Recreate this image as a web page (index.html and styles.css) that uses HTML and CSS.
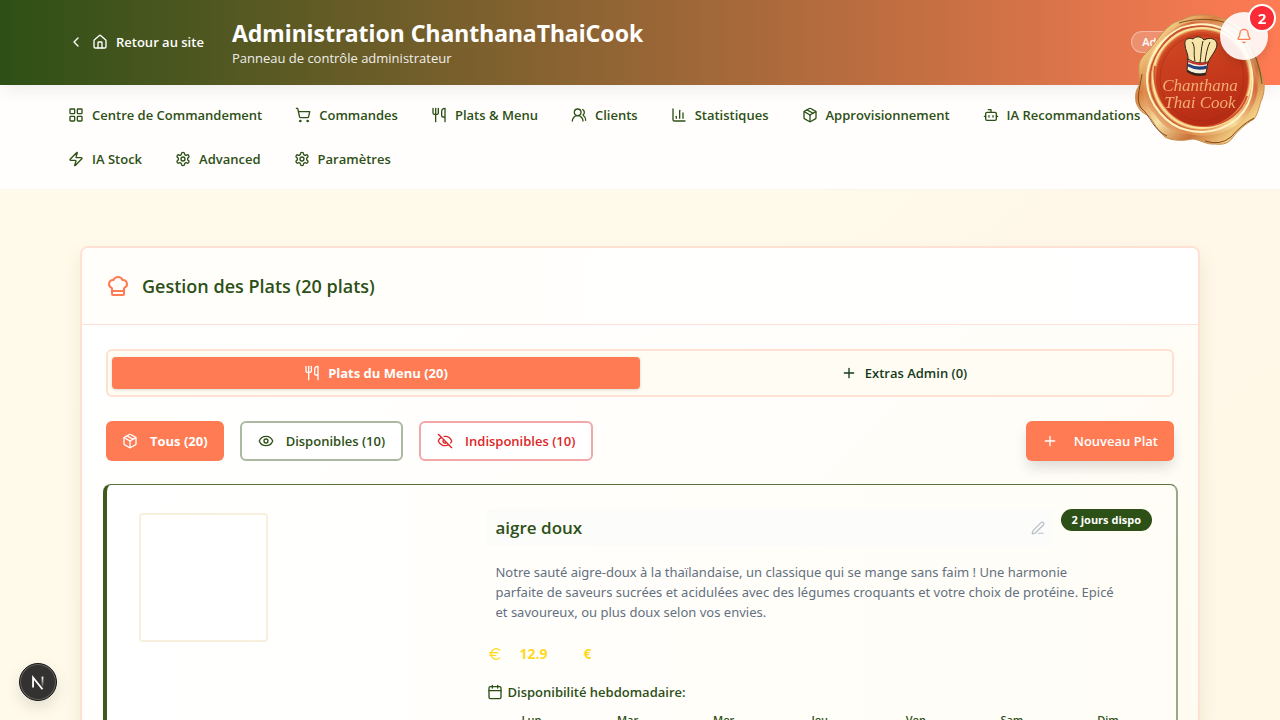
FILE: index.html
```
<!DOCTYPE html>
<html lang="fr">
<head>
<meta charset="utf-8">
<meta name="viewport" content="width=device-width, initial-scale=1">
<title>Administration ChanthanaThaiCook</title>
<link rel="stylesheet" href="styles.css">
</head>
<body>
<svg class="sprite" aria-hidden="true">
  <symbol id="i-chevron" viewBox="0 0 24 24"><path d="m15 18-6-6 6-6"/></symbol>
  <symbol id="i-house" viewBox="0 0 24 24"><path d="M15 21v-8a1 1 0 0 0-1-1h-4a1 1 0 0 0-1 1v8"/><path d="M3 10a2 2 0 0 1 .709-1.528l7-6a2 2 0 0 1 2.582 0l7 6A2 2 0 0 1 21 10v9a2 2 0 0 1-2 2H5a2 2 0 0 1-2-2z"/></symbol>
  <symbol id="i-grid" viewBox="0 0 24 24"><rect width="7" height="7" x="3" y="3" rx="1"/><rect width="7" height="7" x="14" y="3" rx="1"/><rect width="7" height="7" x="14" y="14" rx="1"/><rect width="7" height="7" x="3" y="14" rx="1"/></symbol>
  <symbol id="i-cart" viewBox="0 0 24 24"><circle cx="8" cy="21" r="1"/><circle cx="19" cy="21" r="1"/><path d="M2.05 2.05h2l2.66 12.42a2 2 0 0 0 2 1.58h9.78a2 2 0 0 0 1.95-1.57l1.65-7.43H5.12"/></symbol>
  <symbol id="i-utensils" viewBox="0 0 24 24"><path d="M3 2v7c0 1.100.9 2 2 2h4a2 2 0 0 0 2-2V2"/><path d="M7 2v20"/><path d="M21 15V2a5 5 0 0 0-5 5v6c0 1.100.9 2 2 2h3Zm0 0v7"/></symbol>
  <symbol id="i-users" viewBox="0 0 24 24"><path d="M18 21a8 8 0 0 0-16 0"/><circle cx="10" cy="8" r="5"/><path d="M22 20c0-3.370-2-6.500-4-8a5 5 0 0 0-.45-8.300"/></symbol>
  <symbol id="i-chart" viewBox="0 0 24 24"><path d="M3 3v16a2 2 0 0 0 2 2h16"/><path d="M18 17V9"/><path d="M13 17V5"/><path d="M8 17v-3"/></symbol>
  <symbol id="i-package" viewBox="0 0 24 24"><path d="M11 21.730a2 2 0 0 0 2 0l7-4A2 2 0 0 0 21 16V8a2 2 0 0 0-1-1.730l-7-4a2 2 0 0 0-2 0l-7 4A2 2 0 0 0 3 8v8a2 2 0 0 0 1 1.730z"/><path d="M12 22V12"/><path d="m3.300 7 8.700 5 8.700-5"/><path d="m7.500 4.270 9 5.150"/></symbol>
  <symbol id="i-bot" viewBox="0 0 24 24"><path d="M12 8V4H8"/><rect width="16" height="12" x="4" y="8" rx="2"/><path d="M2 14h2M20 14h2M15 13v2M9 13v2"/></symbol>
  <symbol id="i-zap" viewBox="0 0 24 24"><path d="M4 14a1 1 0 0 1-.78-1.630l9.900-10.200a.5.5 0 0 1 .86.46l-1.920 6.020A1 1 0 0 0 13 10h7a1 1 0 0 1 .78 1.630l-9.900 10.200a.5.5 0 0 1-.86-.46l1.920-6.020A1 1 0 0 0 11 14z"/></symbol>
  <symbol id="i-gear" viewBox="0 0 24 24"><path d="M12.220 2h-.44a2 2 0 0 0-2 2v.18a2 2 0 0 1-1 1.730l-.43.25a2 2 0 0 1-2 0l-.15-.08a2 2 0 0 0-2.730.73l-.22.38a2 2 0 0 0 .73 2.730l.15.1a2 2 0 0 1 1 1.720v.51a2 2 0 0 1-1 1.740l-.15.09a2 2 0 0 0-.73 2.730l.22.38a2 2 0 0 0 2.730.73l.15-.08a2 2 0 0 1 2 0l.43.25a2 2 0 0 1 1 1.730V20a2 2 0 0 0 2 2h.44a2 2 0 0 0 2-2v-.18a2 2 0 0 1 1-1.730l.43-.25a2 2 0 0 1 2 0l.15.08a2 2 0 0 0 2.730-.73l.22-.39a2 2 0 0 0-.73-2.730l-.15-.08a2 2 0 0 1-1-1.740v-.5a2 2 0 0 1 1-1.740l.15-.09a2 2 0 0 0 .73-2.730l-.22-.38a2 2 0 0 0-2.730-.73l-.15.08a2 2 0 0 1-2 0l-.43-.25a2 2 0 0 1-1-1.730V4a2 2 0 0 0-2-2z"/><circle cx="12" cy="12" r="3"/></symbol>
  <symbol id="i-chef" viewBox="0 0 24 24"><path d="M17 21a1 1 0 0 0 1-1v-5.350c0-.457.316-.844.727-1.041a4 4 0 0 0-2.134-7.589 5 5 0 0 0-9.186 0 4 4 0 0 0-2.134 7.588c.411.198.727.585.727 1.041V20a1 1 0 0 0 1 1Z"/><path d="M6 17h12"/></symbol>
  <symbol id="i-plus" viewBox="0 0 24 24"><path d="M5 12h14M12 5v14"/></symbol>
  <symbol id="i-eye" viewBox="0 0 24 24"><path d="M2.062 12.348a1 1 0 0 1 0-.696 10.750 10.750 0 0 1 19.876 0 1 1 0 0 1 0 .696 10.750 10.750 0 0 1-19.876 0"/><circle cx="12" cy="12" r="3"/></symbol>
  <symbol id="i-eye-off" viewBox="0 0 24 24"><path d="M10.733 5.076a10.744 10.744 0 0 1 11.205 6.575 1 1 0 0 1 0 .696 10.747 10.747 0 0 1-1.444 2.490"/><path d="M14.084 14.158a3 3 0 0 1-4.242-4.242"/><path d="M17.479 17.499a10.750 10.750 0 0 1-15.417-5.151 1 1 0 0 1 0-.696 10.750 10.750 0 0 1 4.446-5.143"/><path d="m2 2 20 20"/></symbol>
  <symbol id="i-pen" viewBox="0 0 24 24"><path d="M13 21h8"/><path d="M21.174 6.812a1 1 0 0 0-3.986-3.987L3.842 16.174a2 2 0 0 0-.5.83l-1.321 4.352a.5.5 0 0 0 .623.622l4.353-1.320a2 2 0 0 0 .83-.497z"/></symbol>
  <symbol id="i-euro" viewBox="0 0 24 24"><path d="M4 10h12M4 14h9"/><path d="M19 6a7.700 7.700 0 0 0-5.200-2A7.900 7.900 0 0 0 6 12c0 4.400 3.500 8 7.800 8 2 0 3.800-.8 5.200-2"/></symbol>
  <symbol id="i-calendar" viewBox="0 0 24 24"><path d="M8 2v4M16 2v4"/><rect width="18" height="18" x="3" y="4" rx="2"/><path d="M3 10h18"/></symbol>
  <symbol id="i-bell" viewBox="0 0 24 24"><path d="M10.268 21a2 2 0 0 0 3.464 0"/><path d="M3.262 15.326A1 1 0 0 0 4 17h16a1 1 0 0 0 .74-1.673C19.410 13.956 18 12.499 18 8A6 6 0 0 0 6 8c0 4.499-1.411 5.956-2.738 7.326"/></symbol>
</svg>

<header class="topbar">
  <div class="topbar-inner">
    <a class="back" href="#"><svg class="icon"><use href="#i-chevron"/></svg><svg class="icon"><use href="#i-house"/></svg><span>Retour au site</span></a>
    <div class="brand">
      <h1>Administration ChanthanaThaiCook</h1>
      <p>Panneau de contrôle administrateur</p>
    </div>
    <span class="role">Admin</span>
  </div>
</header>

<nav class="nav">
  <div class="nav-inner">
    <a href="#"><svg class="icon"><use href="#i-grid"/></svg>Centre de Commandement</a>
    <a href="#"><svg class="icon"><use href="#i-cart"/></svg>Commandes</a>
    <a href="#"><svg class="icon"><use href="#i-utensils"/></svg>Plats &amp; Menu</a>
    <a href="#"><svg class="icon"><use href="#i-users"/></svg>Clients</a>
    <a href="#"><svg class="icon"><use href="#i-chart"/></svg>Statistiques</a>
    <a href="#"><svg class="icon"><use href="#i-package"/></svg>Approvisionnement</a>
    <a href="#"><svg class="icon"><use href="#i-bot"/></svg>IA Recommandations</a>
    <a href="#"><svg class="icon"><use href="#i-zap"/></svg>IA Stock</a>
    <a href="#"><svg class="icon"><use href="#i-gear"/></svg>Advanced</a>
    <a href="#"><svg class="icon"><use href="#i-gear"/></svg>Paramètres</a>
  </div>
</nav>

<main class="main">
  <section class="panel">
    <div class="panel-head">
      <svg class="icon icon-lg"><use href="#i-chef"/></svg>
      <h2>Gestion des Plats (20 plats)</h2>
    </div>
    <div class="panel-body">
      <div class="tabs" role="tablist">
        <button class="tab active" role="tab" aria-selected="true"><svg class="icon"><use href="#i-utensils"/></svg>Plats du Menu (20)</button>
        <button class="tab" role="tab" aria-selected="false"><svg class="icon"><use href="#i-plus"/></svg>Extras Admin (0)</button>
      </div>
      <div class="toolbar">
        <button class="btn solid"><svg class="icon"><use href="#i-package"/></svg>Tous (20)</button>
        <button class="btn green"><svg class="icon"><use href="#i-eye"/></svg>Disponibles (10)</button>
        <button class="btn red"><svg class="icon"><use href="#i-eye-off"/></svg>Indisponibles (10)</button>
        <button class="btn solid new"><svg class="icon"><use href="#i-plus"/></svg>Nouveau Plat</button>
      </div>
      <article class="dish">
        <div class="photo-col"><div class="photo"></div></div>
        <div class="info">
          <div class="title-row">
            <button class="dish-title"><span>aigre doux</span><svg class="icon icon-sm"><use href="#i-pen"/></svg></button>
            <span class="days-badge">2 jours dispo</span>
          </div>
          <p class="desc">Notre sauté aigre-doux à la thaïlandaise, un classique qui se mange sans faim ! Une harmonie<br>parfaite de saveurs sucrées et acidulées avec des légumes croquants et votre choix de protéine. Epicé<br>et savoureux, ou plus doux selon vos envies.</p>
          <div class="price"><svg class="icon"><use href="#i-euro"/></svg><span class="amount">12.9</span><span class="unit">€</span></div>
          <div class="week-label"><svg class="icon"><use href="#i-calendar"/></svg>Disponibilité hebdomadaire:</div>
          <div class="week"><span>Lun</span><span>Mar</span><span>Mer</span><span>Jeu</span><span>Ven</span><span>Sam</span><span>Dim</span></div>
        </div>
      </article>
    </div>
  </section>
</main>

<svg class="seal" viewBox="0 0 130 132" role="img" aria-label="Chanthana Thai Cook">
  <defs>
    <linearGradient id="gold" x1="0" y1="0" x2="1" y2="1">
      <stop offset="0" stop-color="#b9772e"/><stop offset=".15" stop-color="#f6d68c"/><stop offset=".32" stop-color="#d98040"/>
      <stop offset=".5" stop-color="#f8e3a4"/><stop offset=".68" stop-color="#c9733a"/><stop offset=".85" stop-color="#f4d083"/><stop offset="1" stop-color="#8a5424"/>
    </linearGradient>
    <linearGradient id="gold2" x1="1" y1="0" x2="0" y2="1">
      <stop offset="0" stop-color="#fae8b4"/><stop offset=".3" stop-color="#d46a3a"/><stop offset=".55" stop-color="#f7dc98"/><stop offset=".8" stop-color="#dd8a4c"/><stop offset="1" stop-color="#fbeec0"/>
    </linearGradient>
    <linearGradient id="wax" x1=".3" y1="0" x2=".6" y2="1">
      <stop offset="0" stop-color="#cf4824"/><stop offset=".5" stop-color="#c63a1b"/><stop offset="1" stop-color="#b42a14"/>
    </linearGradient>
  </defs>
  <path fill="url(#gold)" stroke="#c98a4c" stroke-width="1" d="M43 7C51 5 54 1 65 1S80 2 85 4C94 5 103 8 110 19C116 27 118 33 119 40C123 48 124 51 126 58C130 68 130 76 127 85C124 91 124 98 119 105C110 110 103 117 98 123C94 129 89 131 80 130C71 131 64 125 57 125C49 127 37 127 30 123C22 116 19 108 14 102C8 99 4 97 1 88C0 80 1 76 4 72C5 64 3 59 4 50C6 42 13 38 18 31C25 22 33 10 43 7Z"/>
  <path fill="none" stroke="#7e4b22" stroke-width="1" d="M44 9C60 4 90 2 106 18C119 34 125 52 127 70M7 60C4 78 1 86 6 94C15 101 19 117 32 122M70 127Q85 132 96 123Q106 111 119 104"/>
  <path fill="url(#gold2)" d="M46 11C66 3 88 7 103 22C115 34 119 47 122 64C125 82 118 97 104 109C92 119 73 125 54 120C36 120 26 110 19 99C8 90 7 78 9 63C9 44 26 21 46 11Z"/>
  <path fill="none" stroke="#fff3c4" stroke-width="2" d="M46 14C68 6 91 11 104 27C117 43 122 70 113 90C102 113 75 122 52 116C32 112 13 90 12 68C11 46 25 24 46 14Z"/>
  <path fill="none" stroke="#c9542e" stroke-width="2" d="M48 15C70 9 89 14 101 28C114 45 118 68 110 88C98 109 75 118 54 114C32 109 16 89 15 67C14 46 30 22 48 15Z"/>
  <ellipse cx="66" cy="65" rx="50" ry="51" fill="#e7a35d"/>
  <ellipse cx="67" cy="64" rx="49" ry="50" fill="none" stroke="#fae3a3" stroke-width="2"/>
  <path fill="none" stroke="#d2522c" stroke-width="2" d="M20 52C15 82 39 112 71 112C91 111 107 98 112 82"/>
  <ellipse cx="67" cy="64" rx="47" ry="48" fill="#d85b31"/>
  <ellipse cx="67" cy="65" rx="46" ry="47" fill="url(#wax)"/>
  <ellipse cx="67" cy="64" rx="42" ry="43" fill="none" stroke="#a92b14" stroke-width="1" opacity=".65"/>
  <g stroke="#30251b" stroke-width="1" stroke-linejoin="round">
    <path fill="#f7e4a9" d="M53 47C54 40 50 36 50 31C49 26 53 23 58 25C61 22 66 22 69 26C74 23 82 24 82 31C81 38 75 42 72 51Z"/>
    <path fill="#f6efdd" d="M53 45Q62 51 73 48L71 59Q61 62 52 56Z"/>
    <path stroke="#24417e" stroke-width="3" fill="none" d="M53 51Q62 56 72 53"/>
    <path stroke="#c9302a" stroke-width="2" fill="none" d="M53 47Q62 52 72 49"/>
    <path fill="none" d="M57 28C61 33 58 39 60 47M68 27C66 34 66 42 65 49M75 28C72 34 71 41 70 48"/>
    <path stroke-width="2" fill="none" d="M52 57Q61 63 71 60"/>
  </g>
  <text class="seal-text" x="65" y="77">Chanthana</text>
  <text class="seal-text" x="65" y="94">Thai Cook</text>
</svg>

<button class="bell" aria-label="Notifications"><svg class="icon"><use href="#i-bell"/></svg><span class="count">2</span></button>

<button class="devtools" aria-label="Outils de développement">
  <svg viewBox="0 0 40 40"><defs><linearGradient id="nfade" x1="0" y1="0" x2="0" y2="1"><stop offset="0" stop-color="#fff"/><stop offset="1" stop-color="#fff" stop-opacity="0.100"/></linearGradient></defs><path fill="none" stroke="#fff" stroke-width="2" d="M14.500 26V15L25 28"/><path fill="url(#nfade)" d="M24 14h2v11h-2z"/></svg>
</button>
</body>
</html>
```
FILE: styles.css
```
* { box-sizing: border-box; }

body {
  margin: 0;
  height: 100vh;
  overflow: hidden;
  font-family: "Open Sans", "Noto Sans", sans-serif;
  font-size: 13px;
  line-height: 20px;
  color: #2d5016;
  background: linear-gradient(135deg, #fffbea 0%, #fffaea 50%, #fff7e8 70%, #fff8e6 100%);
}

h1, h2, p { margin: 0; }
a { color: inherit; text-decoration: none; }
button { font: inherit; color: inherit; border: 0; background: none; padding: 0; cursor: pointer; }

.sprite { display: none; }

.icon {
  flex: none;
  width: 16px;
  height: 16px;
  fill: none;
  stroke: currentColor;
  stroke-width: 2;
  stroke-linecap: round;
  stroke-linejoin: round;
}
.icon-lg { width: 24px; height: 24px; color: #ff7b54; }
.icon-sm { width: 14px; height: 14px; color: #b6bcc6; }

/* Top bar */
.topbar {
  position: relative;
  color: #fff;
  background: linear-gradient(to right, #2d5016, #ff7b54);
  box-shadow: 0 10px 15px -3px rgba(0, 0, 0, 0.06);
}
.topbar-inner {
  display: flex;
  align-items: center;
  min-height: 85px;
  padding: 16px 92px 18px 68px;
}
.back { display: flex; align-items: center; gap: 8px; margin-right: 28px; font-weight: 600; }
.brand { flex: 1; }
.brand h1 { font-family: "Noto Sans", sans-serif; font-size: 23px; line-height: 32px; font-weight: 700; }
.brand p { line-height: 18px; opacity: 0.9; }
.role {
  padding: 0 10px;
  border: 1px solid rgba(255, 255, 255, 0.35);
  border-radius: 11px;
  background: rgba(255, 255, 255, 0.2);
  font-size: 11px;
  font-weight: 600;
}

/* Navigation */
.nav { background: #fffefc; border-bottom: 1px solid #faf5ec; }
.nav-inner { display: flex; flex-wrap: wrap; gap: 8px 9px; padding: 12px 56px; }
.nav a {
  display: flex;
  align-items: center;
  gap: 8px;
  height: 36px;
  padding: 0 12px;
  font-weight: 600;
}

/* Panel */
.main { padding: 56px 80px 0; }
.panel {
  border: 2px solid #ffe1d3;
  border-radius: 8px;
  background: linear-gradient(135deg, #fff 0%, #fffefb 50%, #fffbf0 100%);
  box-shadow: 0 10px 20px rgba(120, 80, 20, 0.1);
}
.panel-head {
  display: flex;
  align-items: center;
  gap: 12px;
  padding: 24px;
  border-bottom: 1px solid #ffe1d9;
  background: linear-gradient(to right, #fffefa, #fff);
  border-radius: 6px 6px 0 0;
}
.panel-head h2 { font-size: 18px; line-height: 28px; font-weight: 600; }
.panel-body { padding: 24px; }

.tabs {
  display: grid;
  grid-template-columns: 1fr 1fr;
  padding: 6px 4px;
  border: 2px solid #ffe1d3;
  border-radius: 6px;
  background: #fffdf3;
}
.tab {
  display: flex;
  align-items: center;
  justify-content: center;
  gap: 8px;
  height: 32px;
  border-radius: 4px;
  font-weight: 600;
  color: #163a1c;
}
.tab.active { color: #fff; background: #ff7b54; font-weight: 700; box-shadow: 0 1px 3px rgba(0, 0, 0, 0.15); }

.toolbar { display: flex; gap: 16px; margin: 24px 0 23px; }
.btn {
  display: flex;
  align-items: center;
  gap: 12px;
  height: 40px;
  padding: 0 16px;
  border-radius: 6px;
  font-weight: 600;
}
.btn.solid { color: #fff; background: #ff7b54; font-weight: 700; }
.btn.green { border: 2px solid #abb9a2; background: #fff; }
.btn.red { border: 2px solid #f2a8a8; background: #fff; color: #dc2626; }
.btn.new { gap: 16px; margin-left: auto; font-weight: 600; box-shadow: 0 8px 14px -2px rgba(0, 0, 0, 0.14); }

/* Dish card */
.dish {
  display: flex;
  margin: 0 -4px 0 -3px;
  min-height: 320px;
  padding: 24px 24px 24px 32px;
  border: 1px solid #5b7040;
  border-left: 4px solid #3f5a1c;
  border-right: 2px solid #9aa885;
  border-radius: 8px;
  background: linear-gradient(to right, #fff, #fffefa 50%, #fffdf6);
}
.photo-col { flex: 1; padding-top: 4px; }
.photo { width: 129px; height: 129px; border: 2px solid #f8f0dc; border-radius: 4px; background: #fff; }
.info { flex: 0 0 65.6%; display: flex; flex-direction: column; }
.title-row { display: flex; align-items: flex-start; gap: 8px; }
.dish-title {
  flex: 1;
  display: flex;
  align-items: center;
  justify-content: space-between;
  height: 37px;
  padding: 0 8px;
  border-radius: 4px;
  background: #fcfcfb;
  font-size: 17px;
  font-weight: 600;
}
.days-badge {
  padding: 0 11px;
  border-radius: 11px;
  background: #2d5016;
  color: #fff;
  font-size: 11px;
  font-weight: 700;
  line-height: 22px;
}
.desc { padding: 16px 16px 0 8px; color: #64707f; font-family: "Noto Sans", sans-serif; }
.price { display: flex; align-items: center; height: 24px; margin-top: 20px; color: #ffd91f; font-size: 14px; font-weight: 700; }
.price .amount { width: 64px; margin-left: 16px; }
.week-label { display: flex; align-items: center; gap: 4px; margin-top: 16px; font-weight: 600; }
.week { display: grid; grid-template-columns: repeat(7, 1fr); gap: 8px; margin-top: 8px; text-align: center; font-size: 11px; font-weight: 600; }

/* Floating elements */
.seal { position: fixed; top: 14px; right: 15px; width: 130px; height: 132px; }
.seal-text {
  fill: #f3ad72;
  font-family: "Liberation Serif", serif;
  font-size: 17px;
  font-style: italic;
  text-anchor: middle;
}
.bell {
  position: fixed;
  top: 12px;
  right: 12px;
  display: grid;
  place-items: center;
  width: 48px;
  height: 48px;
  border-radius: 50%;
  background: rgba(255, 255, 255, 0.9);
  color: #ff7b54;
  box-shadow: 0 4px 8px rgba(0, 0, 0, 0.12);
}
.count {
  position: absolute;
  top: -8px;
  right: -8px;
  width: 28px;
  height: 28px;
  border: 2px solid #fff;
  border-radius: 50%;
  background: #fb2c36;
  color: #fff;
  font-size: 15px;
  font-weight: 700;
  line-height: 24px;
}
.devtools {
  position: fixed;
  left: 19px;
  bottom: 19px;
  width: 38px;
  height: 38px;
  border: 1px solid #171717;
  border-radius: 50%;
  background: #333230;
  box-shadow: inset 0 0 0 1px #666, 0 6px 16px rgba(0, 0, 0, 0.12);
}
.devtools svg { display: block; width: 100%; }
```
